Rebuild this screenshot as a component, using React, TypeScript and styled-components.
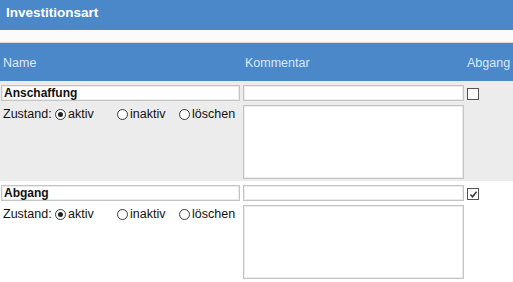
import { FC } from "react";
import styled, { createGlobalStyle } from "styled-components";

interface IEntry {
  name: string;
  state: "aktiv" | "inaktiv" | "löschen";
  abgang: boolean;
}

const entries: IEntry[] = [
  { name: "Anschaffung", state: "aktiv", abgang: false },
  { name: "Abgang", state: "aktiv", abgang: true },
];

const states: IEntry["state"][] = ["aktiv", "inaktiv", "löschen"];

const Radio: FC<{ checked: boolean; label: string }> = ({ checked, label }) => (
  <RadioCell>
    <RadioCircle $checked={checked} />
    {label}
  </RadioCell>
);

const Check: FC<{ checked: boolean }> = ({ checked }) => (
  <CheckBox>
    {checked && (
      <svg width="9" height="9" viewBox="0 0 9 9">
        <path d="M1.5 4.5 L3.5 6.8 L7.6 1.8" fill="none" stroke="#333" strokeWidth="1.4" />
      </svg>
    )}
  </CheckBox>
);

const EntryRow: FC<IEntry & { shaded: boolean }> = ({ name, state, abgang, shaded }) => (
  <Row $shaded={shaded}>
    <LeftCol>
      <NameInput>{name}</NameInput>
      <StateLine>
        <StateLabel>Zustand:</StateLabel>
        {states.map((s) => (
          <Radio key={s} label={s} checked={s === state} />
        ))}
      </StateLine>
    </LeftCol>
    <MiddleCol>
      <CommentInput />
      <CommentArea />
    </MiddleCol>
    <RightCol>
      <Check checked={abgang} />
    </RightCol>
  </Row>
);

const App: FC = (): JSX.Element => {
  return (
    <>
      <GlobalStyle />
      <Page>
        <TitleBar>Investitionsart</TitleBar>
        <Spacer />
        <HeaderBar>
          <HeaderLabel $indent={2}>Name</HeaderLabel>
          <HeaderLabel $indent={2}>Kommentar</HeaderLabel>
          <HeaderLabel $indent={0}>Abgang</HeaderLabel>
        </HeaderBar>
        {entries.map((entry, i) => (
          <EntryRow key={entry.name} {...entry} shaded={i % 2 === 0} />
        ))}
      </Page>
    </>
  );
};

export default App;

const GlobalStyle = createGlobalStyle`
  body {
    margin: 0;
    background: #ffffff;
    font-family: "Liberation Sans", Arial, sans-serif;
    font-size: 12px;
    color: #111;
  }
`;

const Page = styled.div`
  width: 513px;
  display: flex;
  flex-direction: column;
`;

const TitleBar = styled.div`
  height: 30px;
  background: #4a88c9;
  color: #ffffff;
  font-weight: bold;
  font-size: 13.5px;
  display: flex;
  align-items: center;
  padding-left: 6px;
  padding-bottom: 5px;
  box-sizing: border-box;
`;

const Spacer = styled.div`
  height: 12px;
  background: #fbfbfb;
  border-bottom: 1px solid #d8d8d8;
`;

const HeaderBar = styled.div`
  height: 38px;
  background: #4a88c9;
  display: grid;
  grid-template-columns: 242px 224px 1fr;
  align-items: center;
  padding: 2px 0 0 1px;
  box-sizing: border-box;
`;

const HeaderLabel = styled.div<{ $indent: number }>`
  color: #dce9f7;
  font-size: 12.5px;
  padding-left: ${(p) => p.$indent}px;
`;

const Row = styled.div<{ $shaded: boolean }>`
  display: grid;
  grid-template-columns: 242px 224px 1fr;
  padding: 4px 0 2px 1px;
  background: ${(p) => (p.$shaded ? "#ececec" : "#ffffff")};
`;

const LeftCol = styled.div`
  display: flex;
  flex-direction: column;
  gap: 4px;
`;

const MiddleCol = styled.div`
  display: flex;
  flex-direction: column;
  gap: 4px;
`;

const RightCol = styled.div`
  padding-top: 3px;
`;

const fieldBorder = `
  border: 1px solid #c4c4c4;
  box-shadow: inset 0 0 0 1px #ececec;
  background: #ffffff;
  box-sizing: border-box;
`;

const NameInput = styled.div`
  ${fieldBorder}
  width: 239px;
  height: 16px;
  font-weight: bold;
  font-size: 12px;
  line-height: 14px;
  padding-left: 2px;
`;

const CommentInput = styled.div`
  ${fieldBorder}
  width: 221px;
  height: 16px;
`;

const CommentArea = styled.div`
  ${fieldBorder}
  width: 221px;
  height: 74px;
`;

const StateLine = styled.div`
  display: flex;
  align-items: center;
  height: 18px;
  padding-left: 2px;
  font-size: 12.5px;
`;

const StateLabel = styled.span`
  width: 52px;
`;

const RadioCell = styled.span`
  width: 62px;
  display: flex;
  align-items: center;
  gap: 2px;
`;

const RadioCircle = styled.span<{ $checked: boolean }>`
  width: 11px;
  height: 11px;
  border: 1px solid #3a3a3a;
  border-radius: 50%;
  box-sizing: border-box;
  background: #ffffff;
  display: inline-flex;
  align-items: center;
  justify-content: center;
  &::after {
    content: "";
    width: 5px;
    height: 5px;
    border-radius: 50%;
    background: ${(p) => (p.$checked ? "#222" : "transparent")};
  }
`;

const CheckBox = styled.span`
  width: 12px;
  height: 12px;
  border: 1px solid #555;
  box-sizing: border-box;
  background: #ffffff;
  display: flex;
  align-items: center;
  justify-content: center;
`;
